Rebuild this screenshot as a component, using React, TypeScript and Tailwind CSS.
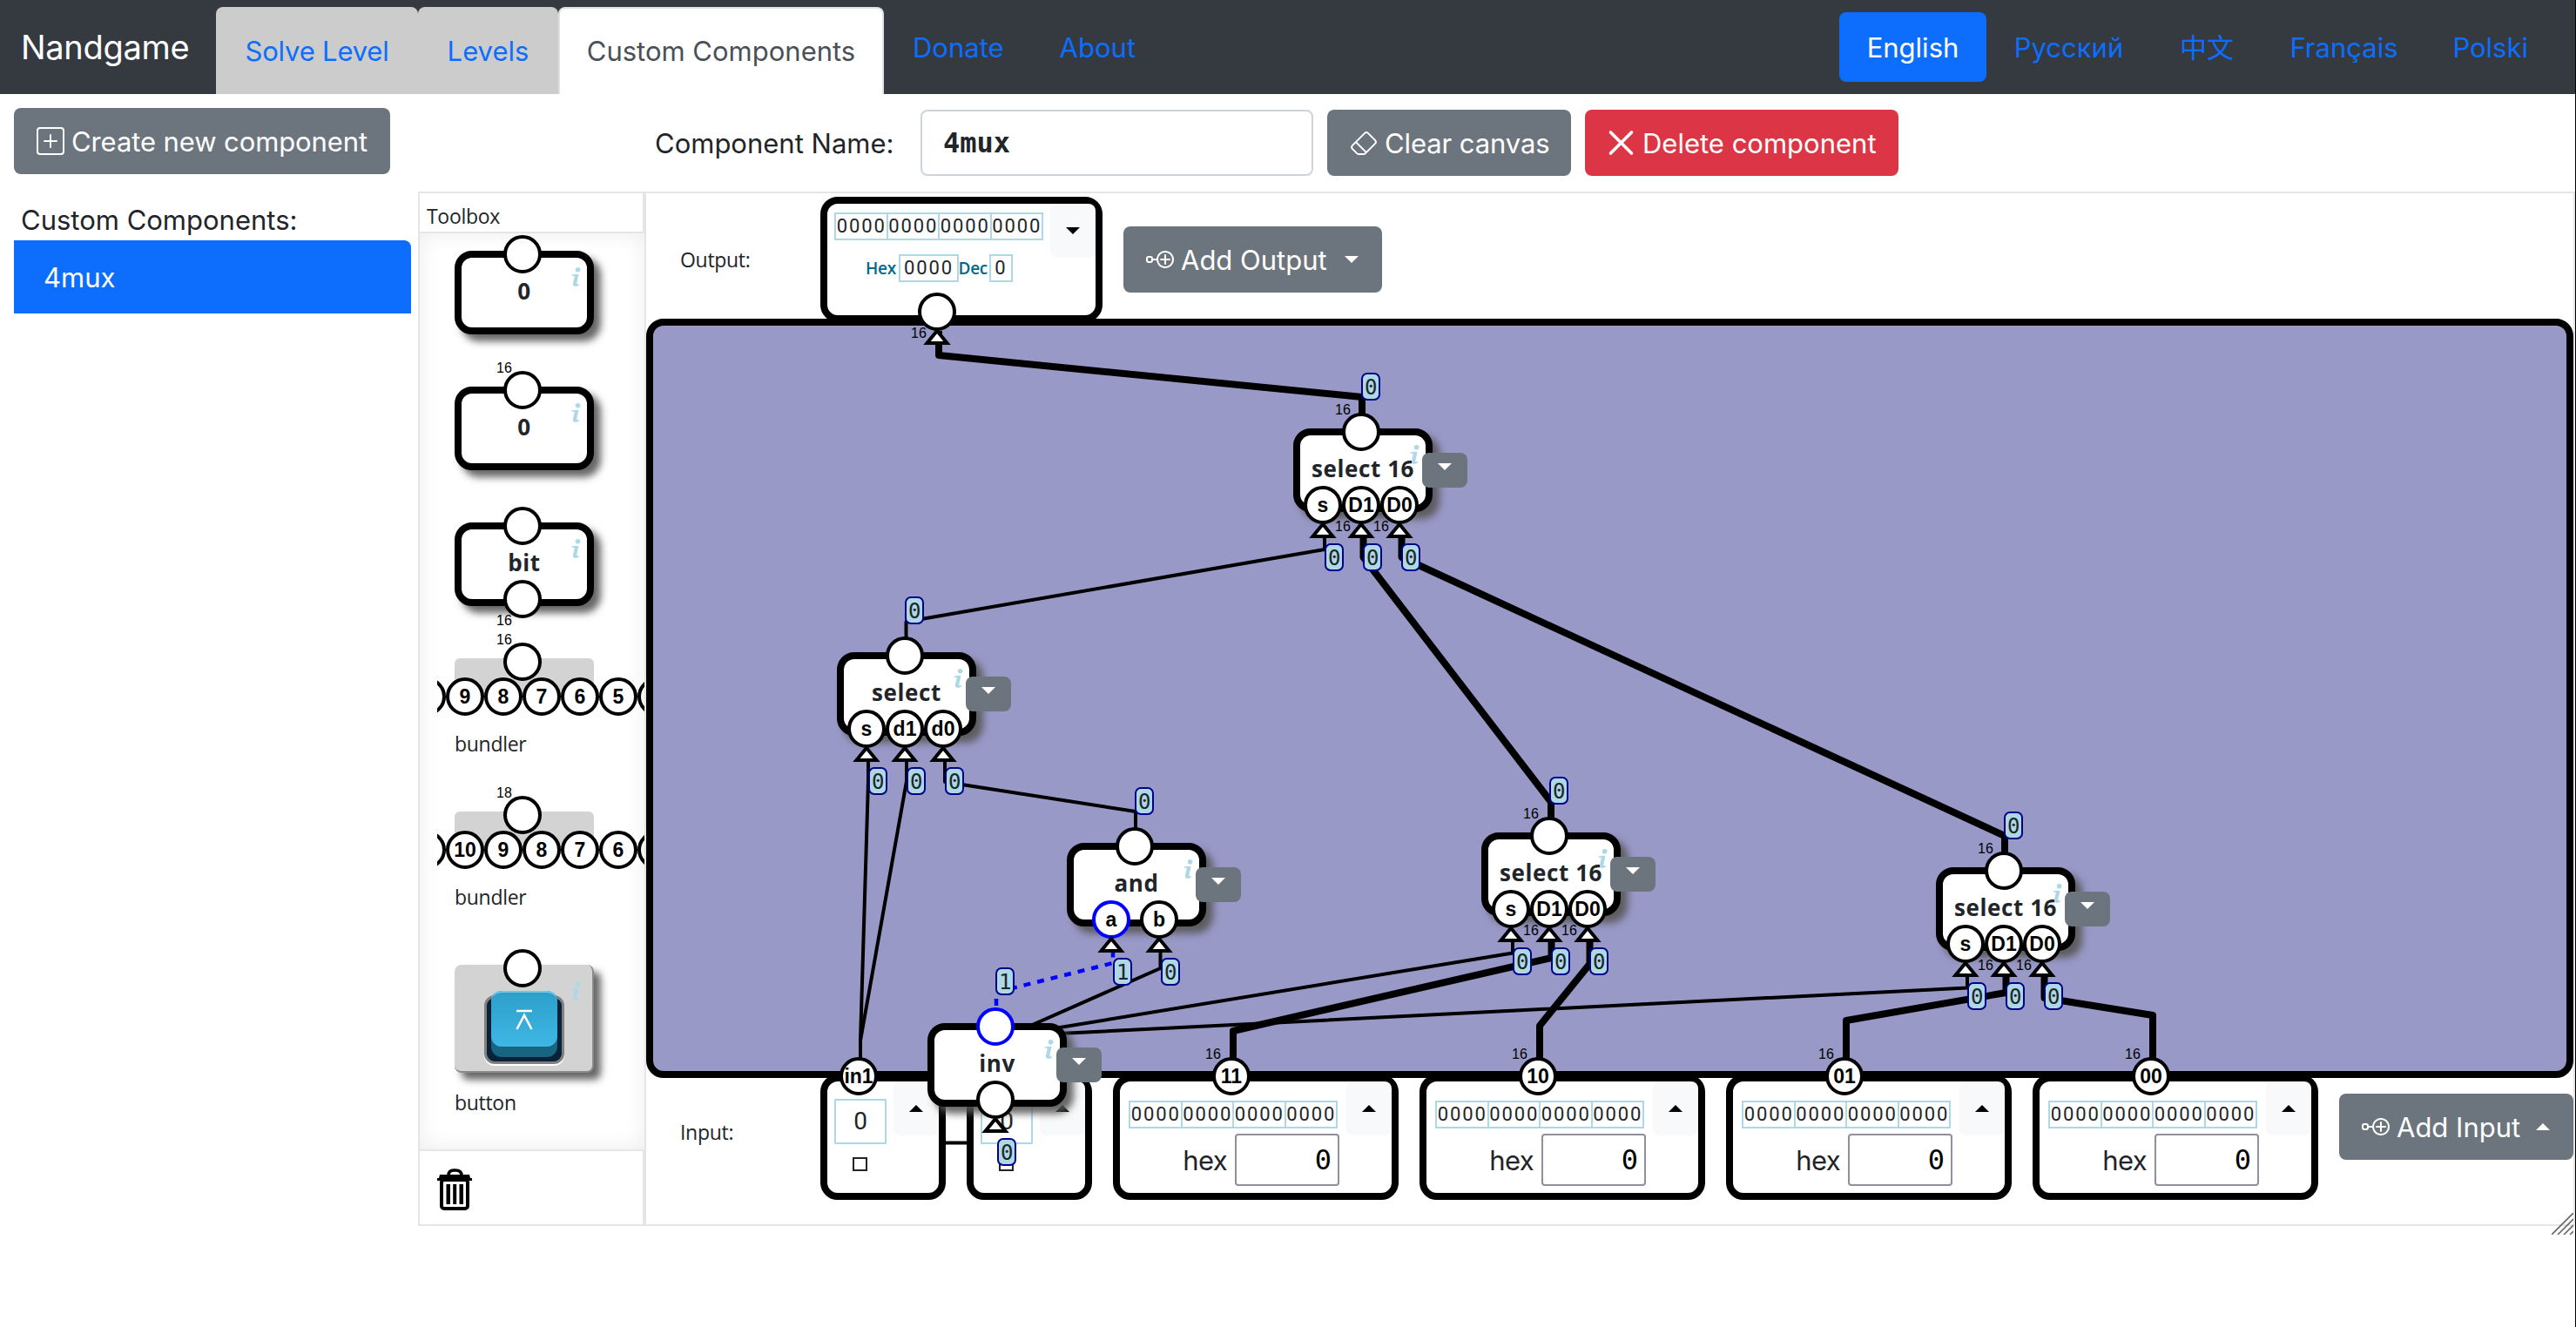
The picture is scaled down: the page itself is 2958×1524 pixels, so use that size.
import React from "react";
import { BsEraser, BsNodePlus, BsPlusSquare } from "react-icons/bs";

/* The workspace sits at this page position; diagram data is kept in page units. */
const OX = 742;
const OY = 222;

type PinData = { dx: number; label: string; bits?: number; active?: boolean; value?: string };
type NodeData = {
  x: number;
  y: number;
  title: string;
  out: { bits?: number; active?: boolean; value: string };
  pins: PinData[];
};

const SELECT_16: PinData[] = [
  { dx: 34, label: "s", value: "0" },
  { dx: 78, label: "D1", bits: 16, value: "0" },
  { dx: 122, label: "D0", bits: 16, value: "0" },
];

const NODES: NodeData[] = [
  { x: 1485, y: 492, title: "select 16", out: { bits: 16, value: "0" }, pins: SELECT_16 },
  {
    x: 961,
    y: 749,
    title: "select",
    out: { value: "0" },
    pins: [
      { dx: 34, label: "s", value: "0" },
      { dx: 78, label: "d1", value: "0" },
      { dx: 122, label: "d0", value: "0" },
    ],
  },
  {
    x: 1225,
    y: 968,
    title: "and",
    out: { value: "0" },
    pins: [
      { dx: 51, label: "a", active: true, value: "1" },
      { dx: 106, label: "b", value: "0" },
    ],
  },
  { x: 1701, y: 956, title: "select 16", out: { bits: 16, value: "0" }, pins: SELECT_16 },
  { x: 2223, y: 996, title: "select 16", out: { bits: 16, value: "0" }, pins: SELECT_16 },
  { x: 1065, y: 1175, title: "inv", out: { active: true, value: "1" }, pins: [{ dx: 78, label: "", value: "0" }] },
];

const THICK_WIRES = [
  "1078,380 1078,408 1564,456 1564,490",
  "1565.5,610 1565.5,640 1781,921 1781,950",
  "1609.5,610 1609.5,640 2302,960 2302,990",
  "1781.5,1074 1781.5,1100 1416,1184 1416,1220",
  "1825.5,1074 1825.5,1107 1768,1178 1768,1220",
  "2303.5,1114 2303.5,1140 2120,1172 2120,1220",
  "2347.5,1114 2347.5,1146 2472,1166 2472,1220",
];

const THIN_WIRES = [
  "1521,610 1521,631 1040.5,714 1040.5,745",
  "997,870 997,897 988,1195 988,1220",
  "1041,870 1041,897 988,1195 988,1220",
  "1085,870 1085,898 1304,932 1304,960",
  "1332.5,1090 1332.5,1112 1156,1190 1156,1236",
  "1737,1074 1737,1094.5 1156,1190",
  "2259,1114 2259,1134.5 1156,1190",
  "1145,1290 1145,1312.5 988,1312.5 988,1250",
];

function Caret({ up = false, className = "" }: { up?: boolean; className?: string }) {
  return (
    <svg viewBox="0 0 16 8" className={`h-2 w-4 shrink-0 fill-current ${className}`}>
      <path d={up ? "M0 8 8 0l8 8z" : "M0 0h16L8 8z"} />
    </svg>
  );
}

function Bits({ groups, className = "" }: { groups: string[]; className?: string }) {
  return (
    <div
      className={`flex h-8 items-center border-2 border-[#add8e6] font-['Roboto'] text-[22px] font-normal tracking-[1.9px] text-[#212529] ${className}`}
    >
      {groups.map((g, i) => (
        <span
          key={i}
          className="flex h-full min-w-0 flex-1 items-center justify-center border-l-2 border-[#add8e6] pb-px pl-px leading-none first:border-l-0"
        >
          {g}
        </span>
      ))}
    </div>
  );
}

const WORD = ["0000", "0000", "0000", "0000"];

/* A round connector, centred on the given point of its positioned parent. */
function Pin({
  cx,
  cy,
  label = "",
  bits,
  bitsBelow = false,
  active = false,
}: {
  cx: number;
  cy: number;
  label?: string;
  bits?: number;
  bitsBelow?: boolean;
  active?: boolean;
}) {
  return (
    <div className="absolute h-0 w-0" style={{ left: cx, top: cy }}>
      {bits !== undefined && (
        <span
          className={`absolute left-[-30px] font-['Liberation_Sans'] text-[16px] leading-4 text-black ${bitsBelow ? "top-[17px]" : "top-[-33px]"}`}
        >
          {bits}
        </span>
      )}
      <div
        className={`absolute -top-[22px] -left-[22px] flex h-11 w-11 items-center justify-center rounded-full border-4 bg-white font-['Liberation_Sans'] text-[23px] leading-none font-bold whitespace-nowrap text-black ${active ? "border-[#0000ff]" : "border-black"}`}
      >
        {label}
      </div>
    </div>
  );
}

/* Arrow head that closes a wire just under a connector. */
function Arrows({ at }: { at: { x: number; y: number }[] }) {
  return (
    <svg viewBox="0 0 160 140" className="pointer-events-none absolute top-0 left-0 h-[140px] w-40 overflow-visible">
      {at.map(({ x, y }) => (
        <path key={x} d={`M${x} ${y + 22}l11.5 14h-23z`} fill="#fff" stroke="#000" strokeWidth="4" />
      ))}
    </svg>
  );
}

/* Info icon: a round dot above a slanted, serifed stem. */
function InfoMark() {
  return (
    <svg viewBox="0 0 11 22" className="absolute top-[19px] left-[134px] h-[22px] w-[11px] fill-[#add8e6]">
      <circle cx="7.6" cy="2.8" r="2.8" />
      <path d="M0.9 8.3 8.5 7.700 6.300 18c-.2 1.200.5 1.700 2.800 1l-.3 1.600c-1 .8-2.500 1.300-4 1.300-2.200 0-3.200-1.200-2.800-3.300L3.700 10.400c.1-.5-.1-.7-.6-.7L.6 9.700z" />
    </svg>
  );
}

function Chip({ title, children }: { title: string; children?: React.ReactNode }) {
  return (
    <div className="relative h-24 w-40">
      <div className="flex h-full w-full items-start justify-center rounded-[20px] border-8 border-black bg-white pt-[20px] font-['Open_Sans'] text-[26px] leading-9 font-bold tracking-[0.6px] whitespace-nowrap text-[#212529] shadow-[8px_8px_8px_rgba(85,85,85,0.9)]">
        {title}
      </div>
      <InfoMark />
      {children}
    </div>
  );
}

function Badge({ x, y, value }: { x: number; y: number; value: string }) {
  return (
    <span
      className="absolute flex h-8 w-[22.4px] items-center justify-center rounded-[7px] border-2 border-[#00008b] bg-[#add8e6] pt-[1px] font-['DejaVu_Sans_Mono'] text-[24px] leading-none text-[#212529]"
      style={{ left: x, top: y }}
    >
      {value}
    </span>
  );
}

function DiagramNode({ node }: { node: NodeData }) {
  return (
    <div className="absolute z-20" style={{ left: node.x - OX, top: node.y - OY }}>
      <Chip title={node.title}>
        <Pin cx={78} cy={4} bits={node.out.bits} active={node.out.active} />
        {node.pins.map((p) => (
          <Pin key={p.dx} cx={p.dx} cy={88} label={p.label} bits={p.bits} bitsBelow active={p.active} />
        ))}
        <Arrows at={node.pins.map((p) => ({ x: p.dx, y: 88 }))} />
        <button className="absolute top-7 left-[148px] flex h-10 w-[52px] items-start justify-center rounded-lg bg-[#6c757d] pt-3 text-white">
          <Caret />
        </button>
        <Badge x={78} y={-64} value={node.out.value} />
        {node.pins.map((p) => (
          <Badge key={p.dx} x={p.dx + 2} y={132} value={p.value ?? "0"} />
        ))}
      </Chip>
    </div>
  );
}

function Wires() {
  return (
    <svg
      viewBox="742 222 2213 1184"
      className="pointer-events-none absolute top-0 left-0 h-[1184px] w-[2213px]"
      fill="none"
      strokeLinejoin="round"
    >
      {THIN_WIRES.map((p) => (
        <polyline key={p} points={p} stroke="#000" strokeWidth="4" />
      ))}
      {THICK_WIRES.map((p) => (
        <polyline key={p} points={p} stroke="#000" strokeWidth="8" />
      ))}
      <polyline
        points="1144,1171 1144,1139.5 1278,1106 1278,1086"
        stroke="#0000ff"
        strokeWidth="4.5"
        strokeDasharray="8 8"
      />
    </svg>
  );
}

/* Only the rims of the outermost connectors reach into the visible strip. */
function BundlerRow({ labels }: { labels: string[] }) {
  return (
    <div className="absolute top-[22px] -left-5 h-11 w-[238px] overflow-hidden">
      {["", ...labels, ""].map((l, i) => (
        <Pin key={i} cx={i * 44 - 12} cy={22} label={l} />
      ))}
    </div>
  );
}

function Bundler({ bits, labels }: { bits: number; labels: string[] }) {
  return (
    <div className="relative h-[88px] w-40">
      <div className="h-11 rounded-t-md bg-[#d3d3d3]" />
      <Pin cx={78} cy={4} bits={bits} />
      <BundlerRow labels={labels} />
      <p className="absolute top-[82px] left-0 text-[23px] leading-8 font-medium tracking-[-0.3px]">bundler</p>
    </div>
  );
}

function PushButton() {
  return (
    <div className="relative h-[124px] w-40 rounded-lg border-r-2 border-b-2 border-[#8a8a8a] bg-[#d3d3d3] shadow-[8px_8px_8px_rgba(85,85,85,0.9)]">
      <InfoMark />
      <div className="absolute top-[35px] left-[34px] h-[79px] w-[92px] rounded-xl border-[3px] border-[#808080] bg-[#0a2238] shadow-[0_2px_0_#fff]" />
      <div className="absolute top-[30px] left-[42px] h-[76px] w-[76px] rounded-xl bg-[#176582]" />
      <div className="absolute top-[30px] left-[42px] flex h-16 w-[76px] items-center justify-center rounded-xl border-t-2 border-[#6cc9ee] bg-linear-to-b from-[#2d9fcb] to-[#3eb7e5]">
        <svg viewBox="0 0 20 24" className="h-6 w-5" fill="none" stroke="#fff" strokeWidth="2.6">
          <path d="M1 2h18M1.5 23 10 7l8.5 16" />
        </svg>
      </div>
      <Pin cx={78} cy={4} />
    </div>
  );
}

function TrashIcon() {
  return (
    <svg viewBox="0 0 40 48" className="h-12 w-10">
      <path d="M13 8q0-6 6-6h2q7 0 7 6" fill="none" stroke="#000" strokeWidth="3.5" />
      <path d="M3 7h34l1 4h2v3H0v-3h2z" />
      <rect x="5" y="13" width="30" height="33" rx="3" fill="none" stroke="#000" strokeWidth="4" />
      <path d="M10.5 18h4.5v23h-4.5zM18.2 18h4v23h-4zM25.5 18h4.5v23h-4.5z" />
    </svg>
  );
}

function Toolbox() {
  return (
    <section className="flex w-[260px] shrink-0 flex-col border-l-2 border-[#e5e5e5] font-['Open_Sans'] text-[#212529]">
      <h2 className="flex h-[46px] items-start border-r-2 border-b-2 border-[#e5e5e5] pt-[10px] pl-2 text-[23px] leading-8 font-medium tracking-[-0.3px]">
        Toolbox
      </h2>
      <div className="relative flex h-[1052px] flex-col overflow-hidden pt-5 pl-10">
        <div className="flex flex-col gap-[60px]">
          <Chip title="0">
            <Pin cx={78} cy={4} />
          </Chip>
          <Chip title="0">
            <Pin cx={78} cy={4} bits={16} />
          </Chip>
          <Chip title="bit">
            <Pin cx={78} cy={4} />
            <Pin cx={78} cy={88} bits={16} bitsBelow />
          </Chip>
          <div className="flex flex-col gap-[88px]">
            <Bundler bits={16} labels={["9", "8", "7", "6", "5"]} />
            <Bundler bits={18} labels={["10", "9", "8", "7", "6"]} />
            <div>
              <PushButton />
              <p className="mt-[18px] text-[23px] leading-8 font-medium tracking-[-0.3px]">button</p>
            </div>
          </div>
        </div>
        <div className="pointer-events-none absolute inset-0 shadow-[inset_0_0_24px_rgba(0,0,0,0.08)]" />
      </div>
      <footer className="flex h-[86px] items-center border-t-2 border-r-2 border-[#e5e5e5] pt-1 pl-5">
        <TrashIcon />
      </footer>
    </section>
  );
}

function Toggle({ up = false }: { up?: boolean }) {
  return (
    <button className="flex h-[62px] w-[52px] shrink-0 items-center justify-center rounded-lg bg-[#f8f9fa] text-black">
      <Caret up={up} />
    </button>
  );
}

function OutputBox() {
  return (
    <div className="relative flex h-36 w-[324px] justify-between rounded-[20px] border-8 border-black bg-white pl-2">
      <div className="flex flex-col pt-[10px]">
        <Bits groups={WORD} className="w-60" />
        <div className="mt-4 flex h-8 items-center pl-9 font-['Open_Sans'] text-[19px] leading-none font-semibold tracking-[-0.3px] text-[#00698c]">
          <span className="w-[37.5px]">Hex</span>
          <Bits groups={["0000"]} className="w-[69px]" />
          <span className="w-[35px]">Dec</span>
          <Bits groups={["0"]} className="w-[27px]" />
        </div>
      </div>
      <Toggle />
      <Pin cx={126} cy={124} bits={16} bitsBelow />
      <Arrows at={[{ x: 126, y: 124 }]} />
    </div>
  );
}

function BitInput({ label }: { label?: string }) {
  return (
    <div className="relative flex h-36 w-36 justify-between rounded-[20px] border-8 border-black bg-white pl-2">
      <div className="flex flex-col items-center pt-5">
        <div className="flex h-[52px] w-[60px] items-center justify-center border-2 border-[#add8e6] font-['Roboto'] text-[28px] leading-none font-normal">
          0
        </div>
        <div className="mt-[15px] mr-[2px] h-4 w-[17px] border-2 border-[#212529]" />
      </div>
      <Toggle up />
      {label && <Pin cx={36} cy={-6} label={label} />}
    </div>
  );
}

function WordInput({ label }: { label: string }) {
  return (
    <div className="relative flex h-36 w-[328px] justify-between rounded-[20px] border-8 border-black bg-white pl-[10px]">
      <div className="flex flex-col pt-[22px]">
        <Bits groups={WORD} className="w-60" />
        <div className="-mr-[2px] mt-[6px] flex items-center justify-end gap-[9px] font-['Inter'] text-[31px] leading-none tracking-[-0.6px] text-[#212529]">
          <span>hex</span>
          <div className="flex h-[60px] w-[120px] items-center justify-end rounded border-2 border-[#8f8f9d] pr-[7px] font-['DejaVu_Sans_Mono'] text-[32px] tracking-normal text-black">
            0
          </div>
        </div>
      </div>
      <Toggle up />
      <Pin cx={128} cy={-6} label={label} bits={16} />
    </div>
  );
}

function Workspace() {
  return (
    <section className="relative flex min-w-0 flex-1 flex-col font-['Open_Sans'] text-[#212529]">
      <div className="flex h-36 items-start pt-1">
        <p className="mt-14 w-[200px] shrink-0 pl-[39px] text-[23px] leading-8 font-medium tracking-[-0.3px]">Output:</p>
        <div className="relative z-10 flex items-start gap-6">
          <OutputBox />
          <button className="mt-[34px] flex h-[76px] w-[297px] items-center rounded-lg bg-[#6c757d] pl-[26px] font-['Inter'] text-[31px] leading-none text-white">
            <BsNodePlus className="mr-2 h-8 w-8" />
            Add Output
            <Caret className="ml-5" />
          </button>
        </div>
      </div>
      <div className="h-[872px] w-[2213px] rounded-[20px] border-8 border-black bg-[#9999c8]" />
      <Wires />
      <div className="-mt-1 flex items-start">
        <p className="mt-[50px] w-[200px] shrink-0 pl-[39px] text-[23px] leading-8 font-medium tracking-[-0.3px]">Input:</p>
        <div className="relative z-10 flex items-start gap-6">
          <BitInput label="in1" />
          <BitInput />
          <WordInput label="11" />
          <WordInput label="10" />
          <WordInput label="01" />
          <WordInput label="00" />
          <button className="mt-[22px] flex h-[76px] w-[269px] items-center rounded-lg bg-[#6c757d] pl-[26px] font-['Inter'] text-[31px] leading-none text-white">
            <BsNodePlus className="mr-2 h-8 w-8" />
            Add Input
            <Caret up className="ml-[18px]" />
          </button>
        </div>
      </div>
      {NODES.map((n, i) => (
        <DiagramNode key={i} node={n} />
      ))}
      <svg
        viewBox="0 0 25 25"
        className="absolute right-0 -bottom-[12px] h-[25px] w-[25px]"
        stroke="#666"
        strokeWidth="1.6"
      >
        <path d="M0 25 25 0M7 25 25 7M14 25l11-11M21 25l4-4" />
      </svg>
    </section>
  );
}

function Header() {
  return (
    <header className="flex h-[108px] shrink-0 items-stretch bg-[#343a40] font-['Inter'] text-[31px] leading-none text-[#0d6efd]">
      <div className="flex w-[248px] items-center pl-6 text-[38px] tracking-[-0.3px] text-white">Nandgame</div>
      <nav className="flex flex-1 items-end">
        <a className="flex h-[100px] w-[232px] items-center justify-center rounded-t-lg bg-[#cccccc] tracking-[-0.2px]">
          Solve Level
        </a>
        <a className="flex h-[100px] w-[161px] items-center justify-center rounded-t-lg bg-[#cccccc]">Levels</a>
        <a className="flex h-[100px] w-[374px] items-center justify-center rounded-t-lg border-2 border-b-0 border-[#dee2e6] bg-white pb-[2px] text-[#495057]">
          Custom Components
        </a>
        <a className="flex h-[108px] items-center pl-[33px]">Donate</a>
        <a className="flex h-[108px] items-center pl-[64px]">About</a>
      </nav>
      <nav className="flex items-center pr-[54px]">
        <a className="flex h-20 w-[169px] items-center justify-center rounded-lg bg-[#0d6efd] text-white">English</a>
        <a className="flex w-[187px] justify-center pl-[2px]">Русский</a>
        <a className="flex w-[132px] justify-center font-['Inter','Noto_Sans_CJK_SC',sans-serif]">中文</a>
        <a className="flex w-[183px] justify-center">Français</a>
        <a className="flex w-[120px] justify-end">Polski</a>
      </nav>
    </header>
  );
}

export default function App() {
  return (
    <div className="flex h-[1524px] w-[2958px] overflow-hidden bg-white">
      <div className="flex w-[2957px] shrink-0 flex-col">
        <Header />
        <div className="flex flex-1">
          <aside className="w-[480px] shrink-0 pt-4 pl-4 font-['Inter'] text-[31px] leading-none text-[#212529]">
            <button className="flex h-[76px] w-[432px] items-center rounded-lg bg-[#6c757d] pl-[26px] tracking-[-0.1px] text-white">
              <BsPlusSquare className="mr-2 h-8 w-8" />
              Create new component
            </button>
            <p className="mt-[31px] mb-[3px] flex h-[42px] items-center pl-2">Custom Components:</p>
            <div className="flex h-[84px] w-[456px] items-center rounded-tr-lg bg-[#0d6efd] pl-[34px] text-white">4mux</div>
          </aside>
          <main className="flex flex-1 flex-col font-['Inter'] text-[31px] leading-none text-[#212529]">
            <div className="flex h-28 items-center pl-[272px]">
              <label className="w-[305px]">Component Name:</label>
              <div className="flex h-[76px] w-[451px] items-center rounded-lg border-2 border-[#ced4da] bg-white pl-6 font-['DejaVu_Sans_Mono'] text-[32px] font-bold">
                4mux
              </div>
              <button className="ml-4 flex h-[76px] w-[280px] items-center rounded-lg bg-[#6c757d] pl-[26px] tracking-[-0.1px] text-white">
                <BsEraser className="mr-2 h-8 w-8" />
                Clear canvas
              </button>
              <button className="ml-4 flex h-[76px] w-[360px] items-center rounded-lg bg-[#dc3545] pl-[26px] text-white">
                <svg viewBox="0 0 32 32" className="mr-2 h-8 w-8" stroke="#fff" strokeWidth="3.6" strokeLinecap="round">
                  <path d="M3.5 4 27.5 28M27.5 4l-24 24" />
                </svg>
                Delete component
              </button>
            </div>
            <div className="flex h-[1188px] border-y-2 border-r-2 border-[#e5e5e5]">
              <Toolbox />
              <div className="flex min-w-0 flex-1 border-l-2 border-[#e5e5e5]">
                <Workspace />
              </div>
            </div>
          </main>
        </div>
      </div>
      <div className="w-px bg-black" />
    </div>
  );
}
